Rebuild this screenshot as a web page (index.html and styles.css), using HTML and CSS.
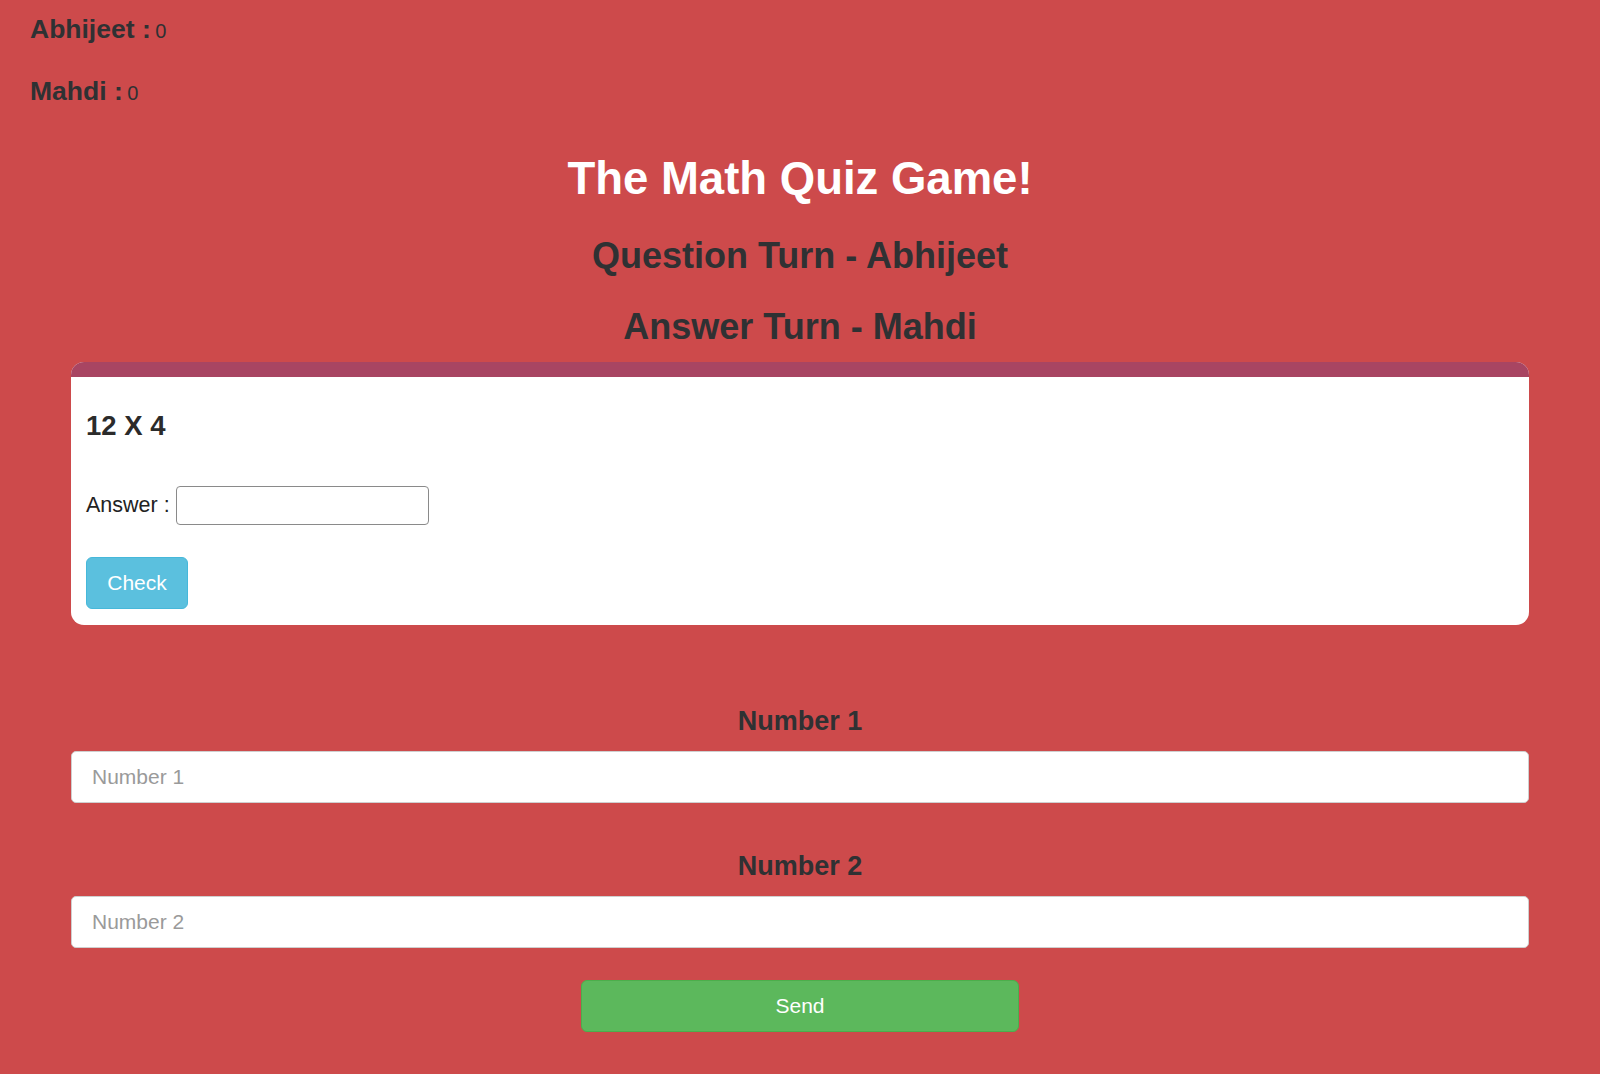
FILE: index.html
```html
<!DOCTYPE html>
<html lang="en">
<head>
<meta charset="utf-8">
<title>The Math Quiz Game!</title>
<link rel="stylesheet" href="styles.css">
</head>
<body>
  <div class="scores">
    <p class="score"><span class="score-name">Abhijeet :</span> <span class="score-val">0</span></p>
    <p class="score score-second"><span class="score-name">Mahdi :</span> <span class="score-val">0</span></p>
  </div>

  <h1 class="title">The Math Quiz Game!</h1>
  <h2 class="turn turn-q">Question Turn - Abhijeet</h2>
  <h2 class="turn turn-a">Answer Turn - Mahdi</h2>

  <div class="container">
    <div class="card">
      <div class="card-bar"></div>
      <div class="card-body">
        <h3 class="question">12 X 4</h3>
        <div class="answer-row">
          <label class="answer-label" for="ans">Answer :</label>
          <input class="answer-input" id="ans" type="text">
        </div>
        <button class="btn btn-check" type="button">Check</button>
      </div>
    </div>

    <div class="form-group first-group">
      <label class="num-label" for="n1">Number 1</label>
      <input class="num-input" id="n1" type="text" placeholder="Number 1">
    </div>
    <div class="form-group second-group">
      <label class="num-label" for="n2">Number 2</label>
      <input class="num-input" id="n2" type="text" placeholder="Number 2">
    </div>
    <div class="send-wrap">
      <button class="btn btn-send" type="button">Send</button>
    </div>
  </div>
</body>
</html>
```

FILE: styles.css
```css
* { box-sizing: border-box; }

html, body {
  margin: 0;
  padding: 0;
}

body {
  background: #cd4a4b;
  color: #2f3133;
  font-family: "Liberation Sans", Arial, Helvetica, sans-serif;
  min-height: 1074px;
  overflow: hidden;
}

.scores {
  padding: 14px 0 0 30px;
}

.score {
  margin: 0;
  height: 30px;
  line-height: 30px;
  white-space: nowrap;
}

.score-second {
  margin-top: 32px;
}

.score-name {
  font-size: 26.5px;
  font-weight: bold;
}

.score-val {
  font-size: 20px;
}

.title {
  margin: 47px 0 0 0;
  text-align: center;
  color: #ffffff;
  font-size: 45.5px;
  line-height: 52px;
  font-weight: bold;
}

.turn {
  margin: 0;
  text-align: center;
  font-size: 36px;
  line-height: 42px;
  font-weight: bold;
}

.turn-q { margin-top: 30px; }
.turn-a { margin-top: 29px; }

.container {
  margin: 14px 71px 0 71px;
}

.card {
  background: #ffffff;
  border-radius: 13px;
  overflow: hidden;
}

.card-bar {
  height: 15px;
  background: #a84562;
}

.card-body {
  padding: 33px 15px 16px 15px;
}

.question {
  margin: 0;
  font-size: 27.5px;
  line-height: 32px;
  font-weight: bold;
  color: #2b2b2b;
}

.answer-row {
  margin-top: 44px;
  display: flex;
  align-items: center;
  gap: 6px;
}

.answer-label {
  font-size: 21.5px;
  color: #222;
}

.answer-input {
  width: 253px;
  height: 39px;
  border: 1.5px solid #8a8a8a;
  border-radius: 4px;
  background: #fff;
  font-size: 20px;
  padding: 0 8px;
}

.btn {
  font-family: "Liberation Sans", Arial, Helvetica, sans-serif;
  font-size: 21px;
  color: #ffffff;
  cursor: pointer;
  border-radius: 6px;
}

.btn-check {
  display: block;
  margin-top: 32px;
  width: 102px;
  height: 52px;
  background: #5bc0de;
  border: 1px solid #46b8da;
}

.form-group {
  display: flex;
  flex-direction: column;
  align-items: stretch;
}

.first-group { margin-top: 81px; }
.second-group { margin-top: 48px; }

.num-label {
  display: block;
  text-align: center;
  font-size: 27px;
  line-height: 30px;
  font-weight: bold;
  color: #2f3133;
}

.num-input {
  margin-top: 15px;
  height: 52px;
  width: 100%;
  border: 1.5px solid #cfcfcf;
  border-radius: 5px;
  background: #fff;
  padding: 0 20px;
  font-family: "Liberation Sans", Arial, Helvetica, sans-serif;
  font-size: 21px;
  color: #555;
}

.num-input::placeholder {
  color: #9a9a9a;
}

.send-wrap {
  display: flex;
  justify-content: center;
  margin-top: 32px;
}

.btn-send {
  width: 438px;
  height: 52px;
  background: #5cb85c;
  border: 1px solid #4cae4c;
}
```
